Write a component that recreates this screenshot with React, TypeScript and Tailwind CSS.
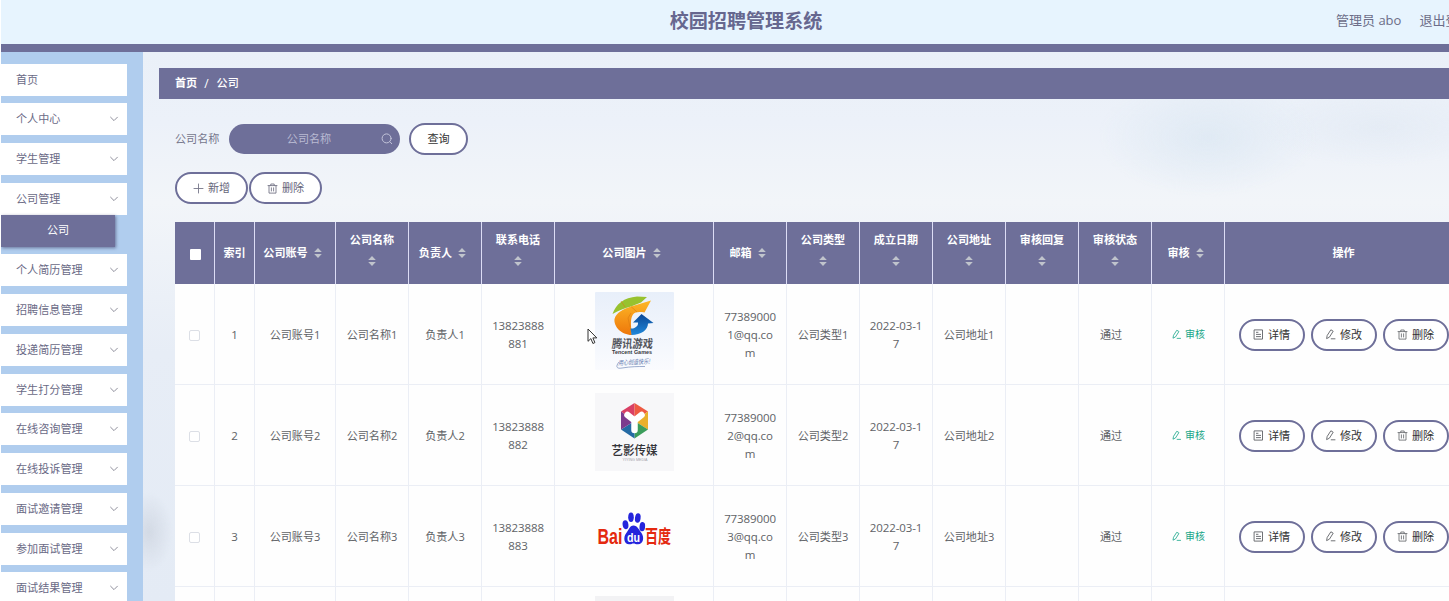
import React from "react";

type IconProps = { className?: string };

const stroke = {
  fill: "none",
  stroke: "currentColor",
  strokeWidth: 1,
  strokeLinecap: "round" as const,
  strokeLinejoin: "round" as const,
};

const ChevronIcon = () => (
  <svg viewBox="0 0 10 10" className="h-[10px] w-[10px] text-[#8f8f9c]" {...stroke}>
    <path d="M1.6 3.2 5 6.6l3.4-3.4" />
  </svg>
);

const PlusIcon = () => (
  <svg viewBox="0 0 11 11" className="h-[11px] w-[11px] text-[#77778a]" {...stroke} strokeWidth={0.9}>
    <path d="M5.5 1v9M1 5.5h9" />
  </svg>
);

const TrashIcon = () => (
  <svg viewBox="0 0 11 11" className="h-[11px] w-[11px]" {...stroke} strokeWidth={0.8}>
    <path d="M1 2.6h9M3.8 2.4V1h3.4v1.4M2 2.8v7.3h7V2.8M4.4 4.8v3.2M6.6 4.8v3.2" />
  </svg>
);

const EditIcon = ({ className = "" }: IconProps) => (
  <svg viewBox="0 0 11 11" className={`h-[11px] w-[11px] ${className}`} {...stroke} strokeWidth={0.9}>
    <path d="M6.2 1 8.2 2.2 4.4 8.2 1.6 9.6 2.1 6.9ZM6.2 9.8h3.8" />
  </svg>
);

const TicketIcon = () => (
  <svg viewBox="0 0 11 11" className="h-[11px] w-[11px]" {...stroke} strokeWidth={0.9}>
    <path d="M1.5.9h8v9.2h-8ZM3.4 3.3h1.6M3.4 5.4h4.2M3.4 7.6h4.2" />
  </svg>
);

const SearchIcon = () => (
  <svg viewBox="0 0 12 12" className="h-[12px] w-[12px] text-[#c3c4da]" {...stroke}>
    <circle cx="5.6" cy="5.4" r="4.5" />
    <path d="m9 8.8 1.7 1.9" />
  </svg>
);

const SortIcon = () => (
  <svg viewBox="0 0 8 10" className="h-[10px] w-[8px] shrink-0" fill="#c0c4cc">
    <path d="M4 0 7.8 4H.2ZM4 10 7.8 6H.2Z" />
  </svg>
);

const TencentLogo = () => (
  <svg viewBox="0 0 79 78" className="h-[78px] w-[79px]">
    <defs>
      <linearGradient id="tile" x1="0" y1="0" x2="0" y2="1">
        <stop offset="0" stopColor="#e8effa" />
        <stop offset="1" stopColor="#fafbfe" />
      </linearGradient>
      <linearGradient id="orange" x1="0" y1="0" x2="0" y2="1">
        <stop offset="0" stopColor="#fdb827" />
        <stop offset="1" stopColor="#ee760a" />
      </linearGradient>
      <linearGradient id="blue" x1="0" y1="0" x2="0" y2="1">
        <stop offset="0" stopColor="#0b4796" />
        <stop offset="1" stopColor="#2088da" />
      </linearGradient>
    </defs>
    <rect width="79" height="78" rx="1" fill="url(#tile)" />
    <path d="M17.5 22C21 12 29 5.500 42 4.500L52 5 46 10.500 36 14.500C29 16.500 23 18.500 17.500 22Z" fill="#98c22f" />
    <path d="M56 8.500 49.500 20.500C44 19.500 40 20 38 22.500C35.500 26 35.500 32 37 43C26 43 18.500 34 19.500 27C21 20.500 29 17 36 14.500Z" fill="url(#orange)" />
    <path d="M26 9 30 15M36 14.500 42 20M36 21 33 26 35 35" fill="none" stroke="#da7a10" strokeWidth=".6" />
    <path d="M46.500 22 58.500 31 53 31.500C53 38 46 43 36.500 43L35.500 36.500C40.500 37 43.500 33.500 43 30.500L38 30.500Z" fill="url(#blue)" />
    <g transform="skewX(-6)">
      <text x="22.500" y="56" textLength="41" lengthAdjust="spacingAndGlyphs" className="font-['Noto_Sans_CJK_SC',sans-serif] text-[12px] font-bold" fill="#54565e">腾讯游戏</text>
    </g>
    <text x="17" y="61.500" textLength="40" lengthAdjust="spacingAndGlyphs" className="font-['Liberation_Sans',sans-serif] text-[5.5px] font-bold" fill="#36383e">Tencent Games</text>
    <g transform="rotate(-3 38 70)">
      <text x="23" y="72.500" textLength="32" lengthAdjust="spacingAndGlyphs" className="font-['Noto_Sans_CJK_SC',sans-serif] text-[6.5px] italic" fill="#6177ad">用心创造快乐!</text>
    </g>
    <path d="M24 70C20 75 22 77 27 76C36 74.500 43 74.500 50 74.500" fill="none" stroke="#7389b9" strokeWidth=".7" />
  </svg>
);

const YiyingLogo = () => (
  <svg viewBox="0 0 79 78" className="h-[78px] w-[79px]">
    <rect width="79" height="78" fill="#f7f7f9" />
    <path d="M39.5 28V10L26 18.5Z" fill="#d94065" />
    <path d="M39.5 28V10L53 18.5Z" fill="#ee5a42" />
    <path d="M39.5 28 53 18.5V36.5Z" fill="#e9b02c" />
    <path d="M39.5 28 53 36.5 39.5 45.5Z" fill="#3c9d5b" />
    <path d="M39.5 28V45.5L26 36.5Z" fill="#246aa4" />
    <path d="M39.5 28 26 36.5V18.5Z" fill="#7c3b8e" />
    <path d="M32.5 22 39.5 27.5 46.5 22M39.5 27.5V37" fill="none" stroke="#fff" strokeWidth="6.5" strokeLinecap="round" strokeLinejoin="round" />
    <text x="16.5" y="62" textLength="46" lengthAdjust="spacingAndGlyphs" className="font-['Noto_Sans_CJK_SC',sans-serif] text-[12.5px] font-medium" fill="#323237">艺影传媒</text>
    <text x="27.5" y="68" textLength="25" lengthAdjust="spacingAndGlyphs" className="font-['Liberation_Sans',sans-serif] text-[4px]" fill="#a2a2a8">YIYING MEDIA</text>
  </svg>
);

const BaiduLogo = () => (
  <svg viewBox="0 0 79 78" className="h-[78px] w-[79px] overflow-visible">
    <text x="2.5" y="50" textLength="25" lengthAdjust="spacingAndGlyphs" className="font-['Liberation_Sans',sans-serif] text-[22.5px] font-bold" fill="#e4290f">Bai</text>
    <g fill="#2424dc">
      <ellipse cx="30.5" cy="30.7" rx="2.9" ry="4.5" transform="rotate(-8 30.5 30.7)" />
      <ellipse cx="36" cy="23.3" rx="2.8" ry="4.8" />
      <ellipse cx="42.8" cy="24" rx="2.8" ry="4.8" transform="rotate(8 42.8 24)" />
      <ellipse cx="47.3" cy="32.7" rx="2.8" ry="4.6" transform="rotate(5 47.3 32.7)" />
      <path d="M38.5 31.5C42.5 31.5 44 36 46.5 39C49.5 43 48.5 50.300 43 50.300C40.500 50.300 40 49.500 38.500 49.500S36.500 50.300 34 50.300C29 50.300 28 43.500 31 39.500C33.500 36.500 34.500 31.500 38.500 31.500Z" />
    </g>
    <text x="32" y="47.8" textLength="13" lengthAdjust="spacingAndGlyphs" className="font-['Liberation_Sans',sans-serif] text-[12px] font-bold" fill="#fff">du</text>
    <text x="50" y="48.5" textLength="26" lengthAdjust="spacingAndGlyphs" className="font-['Noto_Sans_CJK_SC',sans-serif] text-[18.5px] font-bold" fill="#e4290f">百度</text>
  </svg>
);

const menuTop = ["首页", "个人中心", "学生管理", "公司管理"];
const menuBottom = [
  "个人简历管理",
  "招聘信息管理",
  "投递简历管理",
  "学生打分管理",
  "在线咨询管理",
  "在线投诉管理",
  "面试邀请管理",
  "参加面试管理",
  "面试结果管理",
];

const MenuItem = ({ label, arrow }: { label: string; arrow: boolean }) => (
  <div className="flex h-[32px] w-[126px] shrink-0 items-center justify-between bg-white pr-[8px] pl-[15px] text-[#6a6a86]">
    <span className="pt-[1px]">{label}</span>
    {arrow && <ChevronIcon />}
  </div>
);

type Header = { label: string; sort?: "inline" | "below" };

const headers: Header[] = [
  { label: "索引" },
  { label: "公司账号", sort: "inline" },
  { label: "公司名称", sort: "below" },
  { label: "负责人", sort: "inline" },
  { label: "联系电话", sort: "below" },
  { label: "公司图片", sort: "inline" },
  { label: "邮箱", sort: "inline" },
  { label: "公司类型", sort: "below" },
  { label: "成立日期", sort: "below" },
  { label: "公司地址", sort: "below" },
  { label: "审核回复", sort: "below" },
  { label: "审核状态", sort: "below" },
  { label: "审核", sort: "inline" },
  { label: "操作" },
];

const gridCols =
  "grid grid-cols-[40px_40px_81px_73px_73px_73px_159px_73px_73px_73px_73px_73px_73px_73px_238px]";

const HeaderCell = ({ label, sort }: Header) => {
  if (sort === "below") {
    return (
      <div className="flex flex-col items-center border-r border-[#dcdcf5] pt-[9px]">
        <span className="leading-[18px]">{label}</span>
        <span className="mt-[7px]">
          <SortIcon />
        </span>
      </div>
    );
  }
  return (
    <div
      className={`flex items-center justify-center gap-[6px] border-r border-[#dcdcf5] ${sort ? "pr-[5px]" : "pt-[1px]"}`}
    >
      <span>{label}</span>
      {sort && <SortIcon />}
    </div>
  );
};

const Cell = ({ children }: { children?: React.ReactNode }) => (
  <div className="flex items-center justify-center border-r border-b border-[#ebeef5] pt-[3px] text-center">
    {children}
  </div>
);

const Lines = ({ items }: { items: string[] }) => (
  <div className="mb-[1px] flex flex-col text-[11.5px] leading-[18.2px] tracking-[-0.01em]">
    {items.map((t) => (
      <span key={t}>{t}</span>
    ))}
  </div>
);

const ActionButton = ({ icon, label }: { icon: React.ReactNode; label: string }) => (
  <div className="flex h-[32px] w-[66px] shrink-0 items-center justify-center gap-[4px] rounded-full border-[2.5px] border-[#6e6f99] bg-white text-[#333]">
    <span className="text-[#606266]">{icon}</span>
    <span className="pt-[1px]">{label}</span>
  </div>
);

const Row = ({ n, logo }: { n: number; logo: React.ReactNode }) => (
  <div className={`${gridCols} h-[101px] shrink-0 bg-[#fefefe]`}>
    <Cell>
      <span className="mr-[1px] mb-[1px] block h-[11px] w-[11px] rounded-[2px] border border-[#dcdfe6] bg-white" />
    </Cell>
    <Cell>
      <span className="mb-[1px] text-[11.5px]">{n}</span>
    </Cell>
    <Cell>公司账号{n}</Cell>
    <Cell>公司名称{n}</Cell>
    <Cell>负责人{n}</Cell>
    <Cell>
      <Lines items={["13823888", `88${n}`]} />
    </Cell>
    <div className="flex justify-center border-r border-b border-[#ebeef5] pt-[8px]">{logo}</div>
    <Cell>
      <Lines items={["77389000", `${n}@qq.co`, "m"]} />
    </Cell>
    <Cell>公司类型{n}</Cell>
    <Cell>
      <Lines items={["2022-03-1", "7"]} />
    </Cell>
    <Cell>公司地址{n}</Cell>
    <Cell />
    <div className="flex items-center border-r border-b border-[#ebeef5] pt-[3px] pl-[21px]">通过</div>
    <div className="flex items-center justify-center gap-[3px] border-r border-b border-[#ebeef5] pt-[1px] text-[10px] text-[#18a689]">
      <EditIcon className="scale-90" />
      <span>审核</span>
    </div>
    <div className="flex items-center gap-[6px] border-b border-[#ebeef5] pt-[1px] pl-[13.5px]">
      <ActionButton icon={<TicketIcon />} label="详情" />
      <ActionButton icon={<EditIcon />} label="修改" />
      <ActionButton icon={<TrashIcon />} label="删除" />
    </div>
  </div>
);

// Row whose record is still loading: borders and the picture placeholder only.
const PendingRow = () => (
  <div className={`${gridCols} h-[101px] shrink-0 bg-[#fefefe]`}>
    <div className="border-r border-[#ebeef5]" />
    {headers.map((h) => (
      <div key={h.label} className="flex justify-center border-r border-[#ebeef5] pt-[9px]">
        {h.label === "公司图片" && <div className="h-[78px] w-[79px] bg-[#f2f2f4]" />}
      </div>
    ))}
  </div>
);

export default function App() {
  return (
    <div className="relative flex h-[601px] w-[1449px] flex-col overflow-hidden bg-white pl-px font-['Open_Sans','Noto_Sans_CJK_SC',sans-serif] text-[11.1px] whitespace-nowrap text-[#606266]">
      <header className="flex h-[51.5px] shrink-0 border-b-8 border-[#6e6f99] bg-[#e7f4fe]">
        <h1 className="w-[1335px] shrink-0 pt-[2px] pl-[155px] text-center text-[19.1px] leading-[38px] font-bold text-[#66678f]">
          校园招聘管理系统
        </h1>
        <div className="flex shrink-0 gap-[18px] text-[13px] leading-[40px] text-[#6c6d88]">
          <span>管理员 abo</span>
          <span>退出登录</span>
        </div>
      </header>

      <div className="flex min-h-0 flex-1">
        <aside className="flex w-[142px] shrink-0 flex-col overflow-hidden bg-[#b0cdee] pt-[12px]">
          <div className="flex flex-col gap-[7.75px]">
            {menuTop.map((m, i) => (
              <MenuItem key={m} label={m} arrow={i > 0} />
            ))}
          </div>
          <div className="mb-[7.5px] flex h-[32px] w-[114px] shrink-0 items-center justify-center bg-[#6e6f99] text-white shadow-[1px_1px_3px_rgba(60,60,100,0.6)]">
            公司
          </div>
          <div className="flex flex-col gap-[7.75px]">
            {menuBottom.map((m) => (
              <MenuItem key={m} label={m} arrow />
            ))}
          </div>
        </aside>

        <main className="min-w-0 flex-1 overflow-hidden bg-[radial-gradient(ellipse_110px_60px_at_1065px_85px,#e0eaf4,transparent),radial-gradient(ellipse_120px_40px_at_1235px_75px,#e5ecf5,transparent),radial-gradient(ellipse_24px_40px_at_6px_480px,#d3dae5,transparent),linear-gradient(180deg,#eaf0f8_0px,#ecf1f9_70px,#f2f5f9_150px,#e7edf6_300px,#e4ebf5_100%)] pt-[16px] pl-[16px]">
          <div className="flex h-[31.5px] items-center gap-[7px] bg-[#6e6f99] pt-[1px] pl-[16px] text-white">
            <span className="font-bold">首页</span>
            <span className="text-[12px]">/</span>
            <span className="pl-[1px] font-medium">公司</span>
          </div>

          <div className="flex w-[1290px] flex-col pl-[16px]">
            <div className="mt-[24px] flex h-[32px] items-center">
              <span className="w-[54px] text-[#75768c]">公司名称</span>
              <div className="flex h-[30px] w-[171px] items-center rounded-full bg-[#6e6f99] pr-[7px] text-[#b9bad2]">
                <span className="flex-1 pl-[8px] text-center">公司名称</span>
                <SearchIcon />
              </div>
              <div className="ml-[9px] flex h-[32px] w-[59px] items-center justify-center rounded-full border-[2.5px] border-[#6e6f99] bg-white text-[#333]">
                查询
              </div>
            </div>

            <div className="mt-[17px] flex h-[32px] gap-[1px] text-[#66667a]">
              <div className="flex w-[73px] items-center justify-center gap-[4px] rounded-full border-[2.5px] border-[#6e6f99] bg-white">
                <PlusIcon />
                <span className="pt-[1px]">新增</span>
              </div>
              <div className="flex w-[73px] items-center justify-center gap-[4px] rounded-full border-[2.5px] border-[#6e6f99] bg-white">
                <TrashIcon />
                <span className="pt-[1px]">删除</span>
              </div>
            </div>

            <div className="mt-[18px] flex w-[1288px] flex-col">
              <div className={`${gridCols} h-[62px] shrink-0 bg-[#6e6f99] font-bold text-white`}>
                <div className="flex items-center justify-center border-r border-[#dcdcf5]">
                  <span className="mt-[2px] ml-[2px] block h-[11px] w-[11px] rounded-[1px] bg-white" />
                </div>
                {headers.map((h) => (
                  <HeaderCell key={h.label} label={h.label} sort={h.sort} />
                ))}
              </div>
              <Row n={1} logo={<TencentLogo />} />
              <Row n={2} logo={<YiyingLogo />} />
              <Row n={3} logo={<BaiduLogo />} />
              <PendingRow />
            </div>
          </div>
        </main>
      </div>

      <svg viewBox="0 0 11 17" className="absolute top-[327.5px] left-[586.5px] h-[17px] w-[11px]" fill="#fff" stroke="#333" strokeWidth="1">
        <path d="M1 1v12.300l2.900-2.700 2 4.900 2-.9-2-4.700H9.800Z" />
      </svg>
    </div>
  );
}
